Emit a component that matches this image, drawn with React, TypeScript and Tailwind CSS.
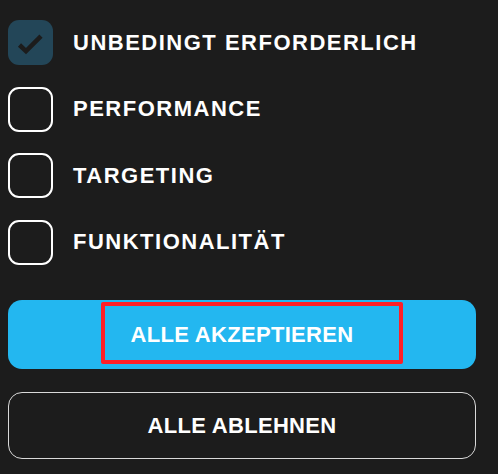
import { useState } from "react"

const categories = [
  { id: "necessary", label: "UNBEDINGT ERFORDERLICH", locked: true },
  { id: "performance", label: "PERFORMANCE", locked: false },
  { id: "targeting", label: "TARGETING", locked: false },
  { id: "functional", label: "FUNKTIONALITÄT", locked: false },
]

function CheckBox({ checked, locked }: { checked: boolean; locked: boolean }) {
  if (checked) {
    return (
      <span
        className={`flex h-[45px] w-[45px] shrink-0 items-center justify-center rounded-[11px] bg-[#234658] ${
          locked ? "" : ""
        }`}
      >
        <svg width="45" height="45" viewBox="0 0 45 45" fill="none">
          <path d="M11.5 25 L18 31.2 L33 16.2" stroke="#1c1c1c" strokeWidth="4.5" strokeLinejoin="miter" />
        </svg>
      </span>
    )
  }
  return <span className="block h-[45px] w-[45px] shrink-0 rounded-[11px] border-[2.5px] border-white" />
}

export default function App() {
  const [selected, setSelected] = useState<Record<string, boolean>>({ necessary: true })

  const toggle = (id: string, locked: boolean) => {
    if (locked) return
    setSelected((s) => ({ ...s, [id]: !s[id] }))
  }

  return (
    <div className="min-h-screen bg-[#1c1c1c] pl-2 pr-[22px] pt-5 font-['Liberation_Sans',Arial,sans-serif] text-white">
      {/* Categories */}
      <div className="flex flex-col gap-[21.5px]">
        {categories.map((c) => (
          <button
            key={c.id}
            onClick={() => toggle(c.id, c.locked)}
            className="flex items-center gap-5 text-left"
          >
            <CheckBox checked={!!selected[c.id]} locked={c.locked} />
            <span className="text-[22px] font-bold leading-none tracking-[1.5px]">{c.label}</span>
          </button>
        ))}
      </div>

      {/* Actions */}
      <div className="mt-[35px] flex flex-col gap-[23px]">
        <button className="relative flex h-[69px] w-full items-center justify-center rounded-[14px] bg-[#23b7f0] text-[22px] font-bold tracking-[0.3px]">
          <span className="pointer-events-none absolute left-[93px] top-[2px] h-[62px] w-[302px] rounded-[2px] border-4 border-[#ff1f26]" />
          <span className="relative">ALLE AKZEPTIEREN</span>
        </button>
        <button className="flex h-[67px] w-full items-center justify-center rounded-[14px] border border-[#d9d9d9] text-[22px] font-bold tracking-[0.3px]">
          ALLE ABLEHNEN
        </button>
      </div>
    </div>
  )
}
